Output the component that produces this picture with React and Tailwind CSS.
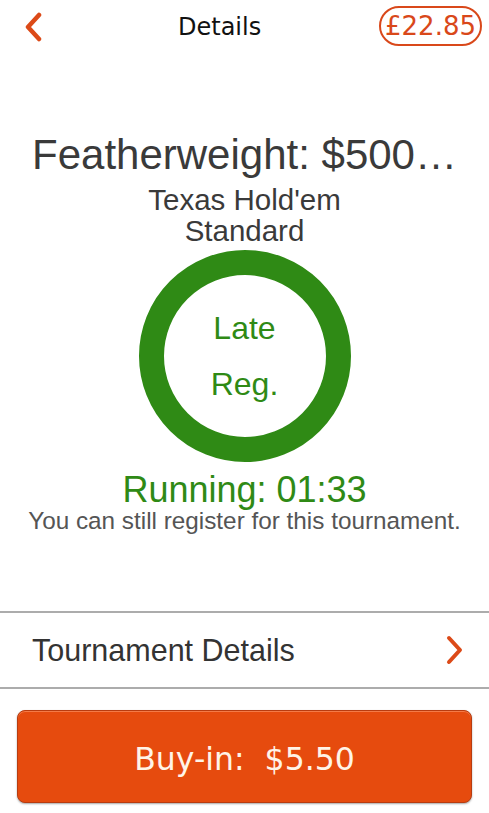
import React from 'react';

const ChevronLeft = () => (
  <svg width="20" height="30" viewBox="0 0 20 30" className="block">
    <polyline points="16,3 5,15 16,27" fill="none" stroke="#dc4a18" strokeWidth="4.5" strokeLinecap="round" strokeLinejoin="round" />
  </svg>
);

const ChevronRight = () => (
  <svg width="20" height="30" viewBox="0 0 20 30" className="block">
    <polyline points="4,3 15,15 4,27" fill="none" stroke="#dc4a18" strokeWidth="4" strokeLinecap="round" strokeLinejoin="round" />
  </svg>
);

const App = () => {
  return (
    <div className="w-[489px] h-[813px] bg-white overflow-hidden flex flex-col font-['Liberation_Sans',Arial,sans-serif]">
      {/* Header */}
      <div className="h-[54px] flex items-center pl-[23px] pr-[7px]">
        <button className="mt-[-1px]">
          <ChevronLeft />
        </button>
        <span className="ml-[135px] text-[24px] leading-[28px] text-[#111] font-['DejaVu_Sans',Verdana,sans-serif]">Details</span>
        <div className="ml-auto h-[40px] mt-[-3px] px-[4px] rounded-full border-2 border-[#d9481a] flex items-center">
          <span className="text-[26px] leading-[30px] text-[#d9481a] font-['DejaVu_Sans',Verdana,sans-serif]">£22.85</span>
        </div>
      </div>

      {/* Title */}
      <div className="flex flex-col items-center mt-[77px]">
        <div className="text-[42px] leading-[48px] text-[#3a3a3a] whitespace-nowrap">Featherweight: $500…</div>
        <div className="mt-[5px] text-[29.5px] leading-[31px] text-[#3a3a3a] text-center">
          <div>Texas Hold'em</div>
          <div>Standard</div>
        </div>

        {/* Status ring */}
        <div className="mt-[4px] w-[212px] h-[212px] rounded-full border-[25px] border-[#2f8a15] flex flex-col items-center justify-center">
          <div className="text-[32px] leading-[56px] text-[#2f8a15] text-center">
            <div>Late</div>
            <div>Reg.</div>
          </div>
        </div>

        <div className="mt-[9px] text-[36px] leading-[38px] text-[#2f8a15]">Running: 01:33</div>
        <div className="text-[24.3px] leading-[24px] text-[#555] whitespace-nowrap">You can still register for this tournament.</div>
      </div>

      {/* Tournament details row */}
      <div className="mt-[78px] h-[2px] bg-[#acacac]" />
      <div className="h-[74px] flex items-center justify-between pl-[32px] pr-[24px]">
        <span className="text-[30.5px] leading-[34px] text-[#333]">Tournament Details</span>
        <ChevronRight />
      </div>
      <div className="h-[2px] bg-[#acacac]" />

      {/* Buy-in */}
      <div className="px-[17px] mt-[21px]">
        <button className="w-full h-[93px] rounded-[8px] bg-[#e64b0e] border border-[#b83c10] shadow-[inset_0_1px_0_#f47a47,0_1px_2px_rgba(0,0,0,0.35)] flex items-center justify-center pt-[4px]">
          <span className="whitespace-pre text-[31.5px] leading-[36px] text-[#fff4e8] font-['DejaVu_Sans',Verdana,sans-serif]">Buy-in:  $5.50</span>
        </button>
      </div>
    </div>
  );
};

export default App;
